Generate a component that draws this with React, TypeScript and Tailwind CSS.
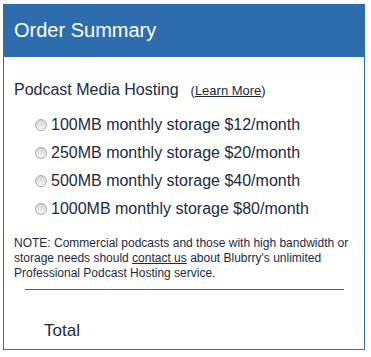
import React from 'react';

const plans = [
  { id: 'p100', label: '100MB monthly storage $12/month' },
  { id: 'p250', label: '250MB monthly storage $20/month' },
  { id: 'p500', label: '500MB monthly storage $40/month' },
  { id: 'p1000', label: '1000MB monthly storage $80/month' },
];

const Radio: React.FC = () => (
  <span className="w-[12px] h-[12px] rounded-full border border-[#a9a9a9] bg-gradient-to-b from-[#d6d6d6] to-[#f4f4f4] shrink-0" />
);

export default function App() {
  return (
    <div className="w-[371px] h-[357px] bg-white pt-[4px] pl-[3px]" style={{ fontFamily: '"Liberation Sans", Arial, sans-serif' }}>
      <div className="w-[362px] h-[346px] border-x border-b border-[#2e6dad] flex flex-col text-[#1b2a41]">
        {/* Header */}
        <div className="h-[53px] bg-[#2e6dad] flex items-center pl-[11px] -mx-px">
          <h2 className="text-white text-[20px] leading-none pb-[2px]">Order Summary</h2>
        </div>

        {/* Body */}
        <div className="pt-[21px] pl-[10px] pr-[10px]">
          <div className="flex items-baseline">
            <span className="text-[16px]">Podcast Media Hosting</span>
            <span className="text-[13px] ml-[12px]">
              (<a className="underline">Learn More</a>)
            </span>
          </div>

          <div className="mt-[13px] pl-[21px] flex flex-col gap-[8px]">
            {plans.map((p) => (
              <label key={p.id} className="flex items-center gap-[4px] h-[20px] text-[16px]">
                <Radio />
                <span>{p.label}</span>
              </label>
            ))}
          </div>

          <p className="mt-[17px] text-[12px] leading-[15px]">
            NOTE: Commercial podcasts and those with high bandwidth or storage needs should{' '}
            <a className="underline">contact us</a> about Blubrry's unlimited Professional Podcast Hosting service.
          </p>

          <div className="mt-[8px] ml-[11px] w-[319px] border-t border-[#2e6dad]" />

          <div className="mt-[28px] pl-[30px] text-[17px]">Total</div>
        </div>
      </div>
    </div>
  );
}
